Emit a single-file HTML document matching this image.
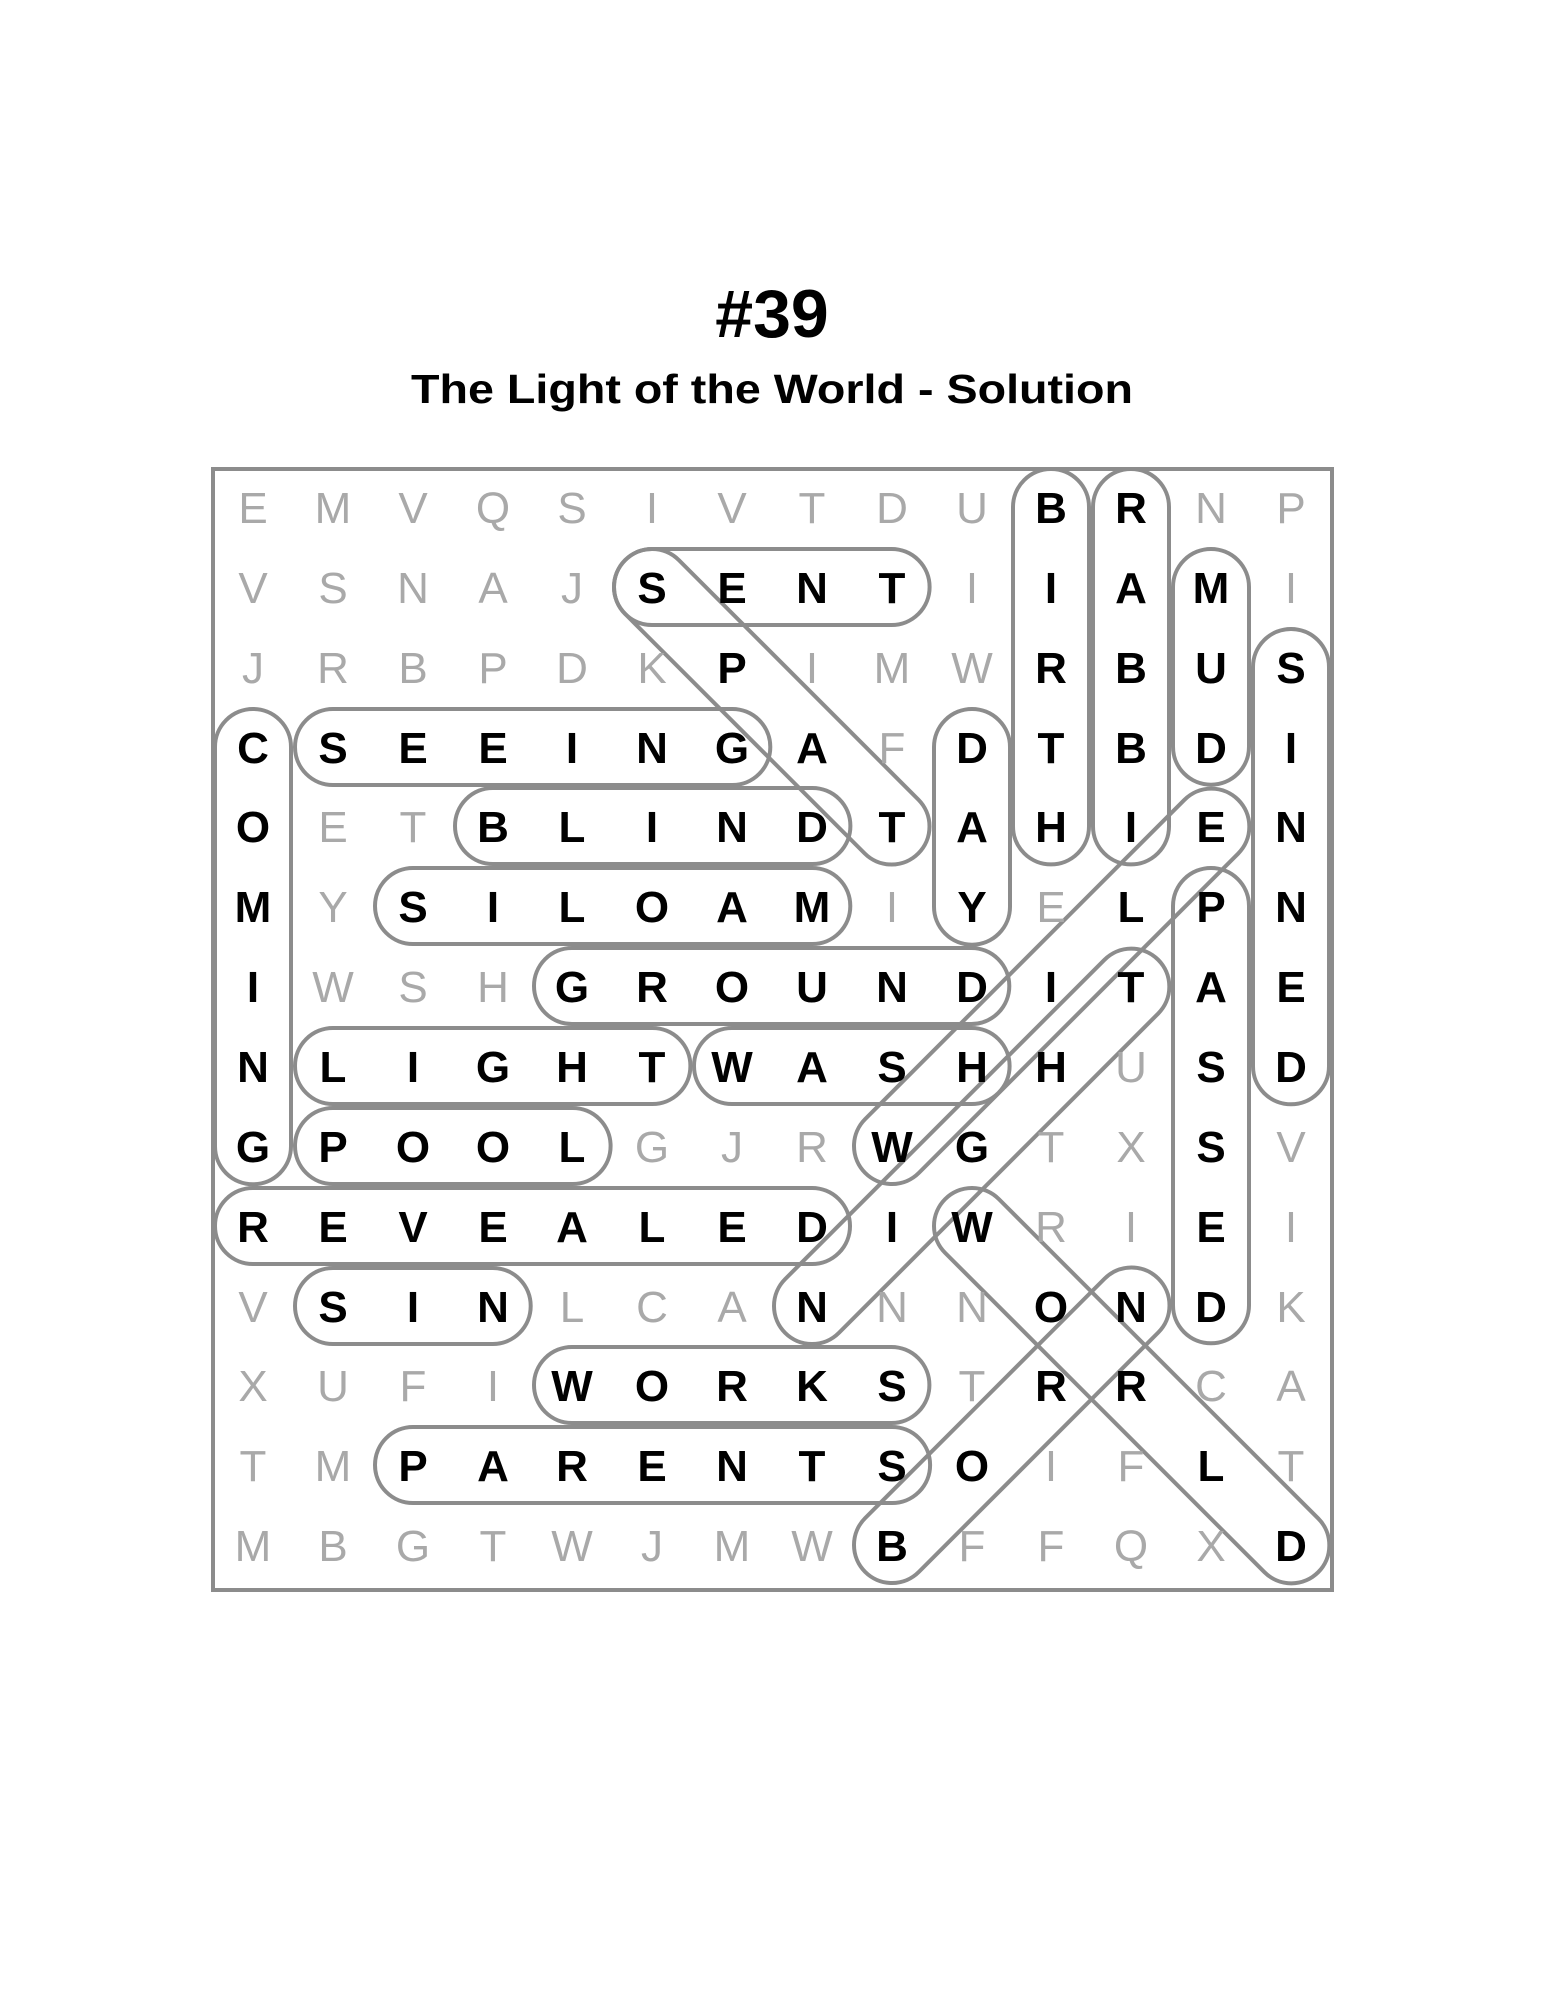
<!DOCTYPE html>
<html><head><meta charset="utf-8"><style>
html,body{margin:0;padding:0;background:#fff;}
svg{display:block;}
.g{fill:#a9a9a9;font-weight:400;}
.b{fill:#000;font-weight:700;}
.cap rect{fill:none;stroke:#8c8c8c;stroke-width:4;}
</style></head><body>
<svg width="1545" height="2000" viewBox="0 0 1545 2000" xmlns="http://www.w3.org/2000/svg" font-family="Liberation Sans, sans-serif">
<text x="772" y="337" text-anchor="middle" font-size="68" font-weight="700">#39</text>
<text x="411" y="403" font-size="41" font-weight="700" textLength="722" lengthAdjust="spacingAndGlyphs">The Light of the World - Solution</text>
<rect x="213" y="469" width="1119" height="1121" fill="none" stroke="#8c8c8c" stroke-width="4"/>
<g class="cap">
<rect x="-38" y="-38" width="395.4" height="76" rx="38" transform="translate(1051 507) rotate(90)"/>
<rect x="-38" y="-38" width="395.4" height="76" rx="38" transform="translate(1131 507) rotate(90)"/>
<rect x="-38" y="-38" width="235.7" height="76" rx="38" transform="translate(1211 587) rotate(90)"/>
<rect x="-38" y="-38" width="475.3" height="76" rx="38" transform="translate(1291 667) rotate(90)"/>
<rect x="-38" y="-38" width="315.6" height="76" rx="38" transform="translate(652 587)"/>
<rect x="-38" y="-38" width="414.7" height="76" rx="38" transform="translate(652 587) rotate(45)"/>
<rect x="-38" y="-38" width="475.3" height="76" rx="38" transform="translate(253 747) rotate(90)"/>
<rect x="-38" y="-38" width="475.3" height="76" rx="38" transform="translate(333 747)"/>
<rect x="-38" y="-38" width="235.7" height="76" rx="38" transform="translate(972 747) rotate(90)"/>
<rect x="-38" y="-38" width="395.4" height="76" rx="38" transform="translate(493 826)"/>
<rect x="-38" y="-38" width="475.3" height="76" rx="38" transform="translate(413 906)"/>
<rect x="-38" y="-38" width="475.3" height="76" rx="38" transform="translate(572 986)"/>
<rect x="-38" y="-38" width="395.4" height="76" rx="38" transform="translate(333 1066)"/>
<rect x="-38" y="-38" width="315.6" height="76" rx="38" transform="translate(732 1066)"/>
<rect x="-38" y="-38" width="315.6" height="76" rx="38" transform="translate(333 1146)"/>
<rect x="-38" y="-38" width="635" height="76" rx="38" transform="translate(253 1226)"/>
<rect x="-38" y="-38" width="235.7" height="76" rx="38" transform="translate(333 1306)"/>
<rect x="-38" y="-38" width="395.4" height="76" rx="38" transform="translate(572 1385)"/>
<rect x="-38" y="-38" width="555.1" height="76" rx="38" transform="translate(413 1465)"/>
<rect x="-38" y="-38" width="527.6" height="76" rx="38" transform="translate(812 1306) rotate(-45)"/>
<rect x="-38" y="-38" width="527.6" height="76" rx="38" transform="translate(892 1146) rotate(-45)"/>
<rect x="-38" y="-38" width="414.7" height="76" rx="38" transform="translate(892 1545) rotate(-45)"/>
<rect x="-38" y="-38" width="527.6" height="76" rx="38" transform="translate(972 1226) rotate(45)"/>
<rect x="-38" y="-38" width="475.3" height="76" rx="38" transform="translate(1211 906) rotate(90)"/>
</g>
<g font-size="44" text-anchor="middle">
<text x="253 333 413 493 572 652 732 812 892 972 1051 1131 1211 1291" y="523"><tspan class="g">EMVQSIVTDU</tspan><tspan class="b">BR</tspan><tspan class="g">NP</tspan></text>
<text x="253 333 413 493 572 652 732 812 892 972 1051 1131 1211 1291" y="603"><tspan class="g">VSNAJ</tspan><tspan class="b">SENT</tspan><tspan class="g">I</tspan><tspan class="b">IAM</tspan><tspan class="g">I</tspan></text>
<text x="253 333 413 493 572 652 732 812 892 972 1051 1131 1211 1291" y="683"><tspan class="g">JRBPDK</tspan><tspan class="b">P</tspan><tspan class="g">IMW</tspan><tspan class="b">RBUS</tspan></text>
<text x="253 333 413 493 572 652 732 812 892 972 1051 1131 1211 1291" y="763"><tspan class="b">CSEEINGA</tspan><tspan class="g">F</tspan><tspan class="b">DTBDI</tspan></text>
<text x="253 333 413 493 572 652 732 812 892 972 1051 1131 1211 1291" y="842"><tspan class="b">O</tspan><tspan class="g">ET</tspan><tspan class="b">BLINDTAHIEN</tspan></text>
<text x="253 333 413 493 572 652 732 812 892 972 1051 1131 1211 1291" y="922"><tspan class="b">M</tspan><tspan class="g">Y</tspan><tspan class="b">SILOAM</tspan><tspan class="g">I</tspan><tspan class="b">Y</tspan><tspan class="g">E</tspan><tspan class="b">LPN</tspan></text>
<text x="253 333 413 493 572 652 732 812 892 972 1051 1131 1211 1291" y="1002"><tspan class="b">I</tspan><tspan class="g">WSH</tspan><tspan class="b">GROUNDITAE</tspan></text>
<text x="253 333 413 493 572 652 732 812 892 972 1051 1131 1211 1291" y="1082"><tspan class="b">NLIGHTWASHH</tspan><tspan class="g">U</tspan><tspan class="b">SD</tspan></text>
<text x="253 333 413 493 572 652 732 812 892 972 1051 1131 1211 1291" y="1162"><tspan class="b">GPOOL</tspan><tspan class="g">GJR</tspan><tspan class="b">WG</tspan><tspan class="g">TX</tspan><tspan class="b">S</tspan><tspan class="g">V</tspan></text>
<text x="253 333 413 493 572 652 732 812 892 972 1051 1131 1211 1291" y="1242"><tspan class="b">REVEALEDIW</tspan><tspan class="g">RI</tspan><tspan class="b">E</tspan><tspan class="g">I</tspan></text>
<text x="253 333 413 493 572 652 732 812 892 972 1051 1131 1211 1291" y="1322"><tspan class="g">V</tspan><tspan class="b">SIN</tspan><tspan class="g">LCA</tspan><tspan class="b">N</tspan><tspan class="g">NN</tspan><tspan class="b">OND</tspan><tspan class="g">K</tspan></text>
<text x="253 333 413 493 572 652 732 812 892 972 1051 1131 1211 1291" y="1401"><tspan class="g">XUFI</tspan><tspan class="b">WORKS</tspan><tspan class="g">T</tspan><tspan class="b">RR</tspan><tspan class="g">CA</tspan></text>
<text x="253 333 413 493 572 652 732 812 892 972 1051 1131 1211 1291" y="1481"><tspan class="g">TM</tspan><tspan class="b">PARENTSO</tspan><tspan class="g">IF</tspan><tspan class="b">L</tspan><tspan class="g">T</tspan></text>
<text x="253 333 413 493 572 652 732 812 892 972 1051 1131 1211 1291" y="1561"><tspan class="g">MBGTWJMW</tspan><tspan class="b">B</tspan><tspan class="g">FFQX</tspan><tspan class="b">D</tspan></text>
</g>
</svg>
</body></html>
